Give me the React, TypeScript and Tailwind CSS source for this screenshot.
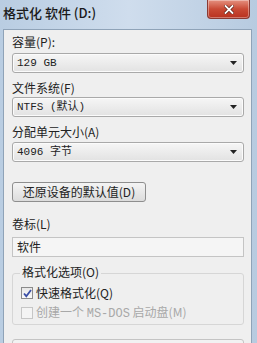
import React from 'react';

const cjk = "font-['Noto_Sans_CJK_SC','Noto_Sans',sans-serif]";
const mono = "font-['Liberation_Mono','Noto_Sans_CJK_SC',monospace]";

function Select({ value }: { value: string }) {
  return (
    <div className="flex h-[20px] items-center justify-between rounded-[3px] border border-[#a9a9a9] bg-gradient-to-b from-[#f6f6f6] to-[#e2e2e2] pl-[4px] pr-[6px] shadow-[inset_0_0_0_1px_#fbfbfb]">
      <span className={`${mono} text-[11px] leading-none text-[#222]`}>{value}</span>
      <svg width="7" height="4" viewBox="0 0 7 4">
        <path d="M0 0h7L3.5 4z" fill="#222" />
      </svg>
    </div>
  );
}

function Label({ children }: { children: React.ReactNode }) {
  return <div className={`${cjk} text-[12px] leading-[14px] text-[#222]`}>{children}</div>;
}

export default function App() {
  return (
    <div className="flex h-[343px] w-[257px] flex-col overflow-hidden bg-gradient-to-r from-[#b9cde2] via-[#cfdded] to-[#b7cbe0]">
      {/* title bar */}
      <div className="flex h-[29px] shrink-0 items-start justify-between pl-[3px] pr-[7px]">
        <span className={`${cjk} mt-[5px] text-[13px] font-medium leading-[16px] text-[#1a1a1a]`}>
          格式化 软件 (D:)
        </span>
        <div className="flex h-[19px] w-[43px] items-center justify-center rounded-b-[4px] border border-t-0 border-[#8a3a33] bg-gradient-to-b from-[#e4907f] via-[#c94a35] to-[#b8311f] shadow-[inset_0_0_0_1px_rgba(255,255,255,0.35)]">
          <svg width="10" height="9" viewBox="0 0 10 9">
            <path d="M1.5 1l7 7M8.5 1l-7 7" stroke="#5a1b12" strokeWidth="3.2" strokeLinecap="square" />
            <path d="M1.5 1l7 7M8.5 1l-7 7" stroke="#fff" strokeWidth="1.8" strokeLinecap="square" />
          </svg>
        </div>
      </div>

      {/* client area */}
      <div className="ml-[3px] mr-[5px] flex flex-1 flex-col border border-[#8fa3b8] bg-[#efefef] pl-[8px] pr-[7px] pt-[5px]">
        <Label>容量(P):</Label>
        <div className="mt-[4px]">
          <Select value="129 GB" />
        </div>

        <div className="mt-[8px]">
          <Label>文件系统(F)</Label>
        </div>
        <div className="mt-[2px]">
          <Select value="NTFS (默认)" />
        </div>

        <div className="mt-[8px]">
          <Label>分配单元大小(A)</Label>
        </div>
        <div className="mt-[3px]">
          <Select value="4096 字节" />
        </div>

        <div className="mt-[20px] flex">
          <div className={`${cjk} flex h-[20px] w-[134px] items-center justify-center rounded-[3px] border border-[#8e8e8e] bg-gradient-to-b from-[#f4f4f4] to-[#dcdcdc] text-[12px] leading-none text-[#222]`}>
            还原设备的默认值(D)
          </div>
        </div>

        <div className="mt-[15px]">
          <Label>卷标(L)</Label>
        </div>
        <div className={`${cjk} mt-[6px] flex h-[20px] items-center border border-[#c4c4c4] bg-[#f5f5f5] pl-[4px] text-[12px] text-[#222]`}>
          软件
        </div>

        {/* group box */}
        <div className="relative mt-[16px] h-[52px] rounded-[3px] border border-[#d6d6d6] px-[8px] pt-[12px]">
          <span className={`${cjk} absolute left-[7px] top-[-9px] bg-[#efefef] px-[2px] text-[12px] leading-[14px] text-[#222]`}>
            格式化选项(O)
          </span>
          <div className="flex items-center gap-[3px]">
            <div className="flex h-[12px] w-[12px] items-center justify-center border border-[#8b8b8b] bg-gradient-to-b from-[#e8e8e8] to-[#fafafa]">
              <svg width="9" height="9" viewBox="0 0 9 9">
                <path d="M1 4.5l2.3 2.7L8 1" stroke="#3b4fa6" strokeWidth="1.8" fill="none" />
              </svg>
            </div>
            <span className={`${cjk} text-[12px] leading-[14px] text-[#222]`}>快速格式化(Q)</span>
          </div>
          <div className="mt-[5px] flex items-center gap-[3px]">
            <div className="h-[12px] w-[12px] border border-[#c6c6c6] bg-[#f4f4f4]" />
            <span className={`${cjk} text-[12px] leading-[14px] text-[#a8a8a8]`}>
              创建一个 <span className={mono}>MS-DOS</span> 启动盘(M)
            </span>
          </div>
        </div>

        <div className="mt-[14px] h-[20px] shrink-0 rounded-t-[3px] border border-[#c4c4c4] bg-[#f2f2f2]" />
      </div>
    </div>
  );
}
